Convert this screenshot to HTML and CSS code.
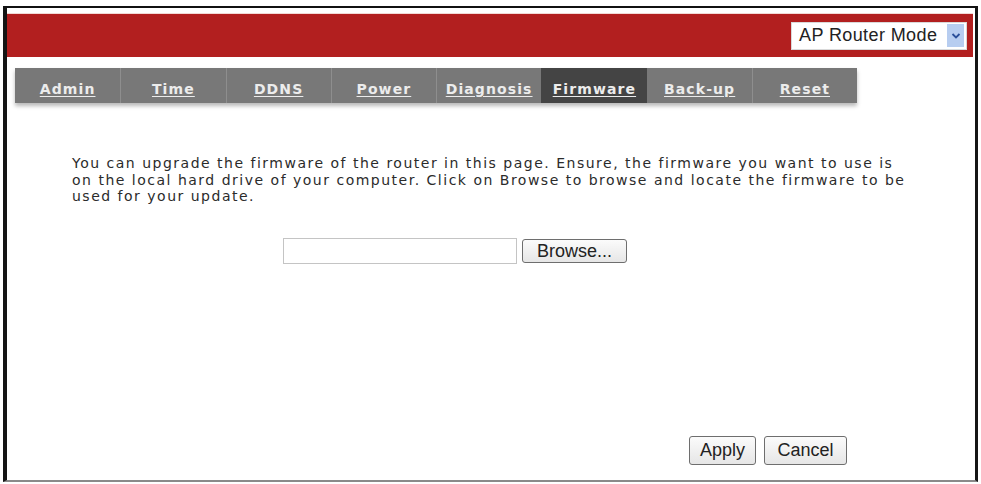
FILE: index.html
```html
<!DOCTYPE html>
<html>
<head>
<meta charset="utf-8">
<link rel="stylesheet" href="styles.css">
</head>
<body>
<div class="frame">
  <div class="header">
    <div class="mode-select">
      <span class="mode-text">AP Router Mode</span>
      <span class="mode-arrow"><svg width="10" height="8" viewBox="0 0 10 8"><path d="M1.5 2 L5 5.5 L8.5 2" fill="none" stroke="#2a4f9a" stroke-width="1.8"/></svg></span>
    </div>
  </div>
  <nav class="tabs">
    <a class="tab">Admin</a>
    <a class="tab">Time</a>
    <a class="tab">DDNS</a>
    <a class="tab">Power</a>
    <a class="tab">Diagnosis</a>
    <a class="tab active">Firmware</a>
    <a class="tab">Back-up</a>
    <a class="tab">Reset</a>
  </nav>
  <p class="intro">You can upgrade the firmware of the router in this page. Ensure, the firmware you want to use is<br>on the local hard drive of your computer. Click on Browse to browse and locate the firmware to be<br>used for your update.</p>
  <div class="file-row">
    <div class="file-field"></div>
    <button class="btn browse">Browse...</button>
  </div>
  <div class="actions">
    <button class="btn apply">Apply</button>
    <button class="btn cancel">Cancel</button>
  </div>
</div>
</body>
</html>
```
FILE: styles.css
```css
html, body {
  margin: 0;
  padding: 0;
  background: #ffffff;
}
body {
  width: 981px;
  height: 484px;
  overflow: hidden;
  font-family: "DejaVu Sans", Verdana, sans-serif;
}
.frame {
  box-sizing: border-box;
  margin: 6px 0 0 3px;
  width: 975px;
  height: 476px;
  border-top: 2px solid #111;
  border-left: 4px solid #151515;
  border-right: 3px solid #151515;
  border-bottom: 2px solid #8a8a8a;
  display: flex;
  flex-direction: column;
  background: #fff;
}
.header {
  margin-top: 5px;
  margin-right: 2px;
  height: 44px;
  background: #b21f1f;
  border-top: 1px solid #f3d9d6;
  display: flex;
  align-items: center;
  justify-content: flex-end;
  padding-right: 6px;
  box-sizing: border-box;
}
.mode-select {
  display: flex;
  align-items: center;
  background: #fff;
  height: 28px;
  width: 176px;
  box-sizing: border-box;
  border: 1px solid #d9d9d9;
  padding-left: 7px;
  padding-right: 2px;
}
.mode-text {
  flex: 1;
  font-family: "Liberation Sans", Arial, sans-serif;
  font-size: 18px;
  color: #222;
  letter-spacing: 0.4px;
  white-space: nowrap;
}
.mode-arrow {
  width: 17px;
  height: 23px;
  background: #b7cdf0;
  display: flex;
  align-items: center;
  justify-content: center;
}
.tabs {
  margin: 11px 0 0 8px;
  width: 842px;
  height: 35px;
  display: grid;
  grid-template-columns: repeat(8, 1fr);
  background: #787878;
  box-shadow: 0 3px 4px rgba(0,0,0,0.28);
}
.tab {
  display: block;
  text-align: center;
  padding-top: 13px;
  box-sizing: border-box;
  font-family: "DejaVu Sans", Verdana, sans-serif;
  font-weight: bold;
  font-size: 14px;
  letter-spacing: 1.1px;
  color: #ececec;
  text-decoration: underline;
  text-underline-offset: 2px;
  border-left: 1px solid #8e8e8e;
  white-space: nowrap;
}
.tab:first-child {
  border-left: none;
}
.tab.active {
  background: #444444;
  border-left-color: #444;
}
.tab.active + .tab {
  border-left-color: #787878;
}
.intro {
  margin: 52px 0 0 65px;
  font-family: "DejaVu Sans", Verdana, sans-serif;
  font-size: 14px;
  letter-spacing: 1.5px;
  line-height: 16.5px;
  color: #2b2b2b;
  white-space: nowrap;
}
.file-row {
  display: flex;
  align-items: center;
  gap: 5px;
  margin: 33px 0 0 276px;
}
.file-field {
  width: 234px;
  height: 26px;
  box-sizing: border-box;
  border: 1px solid #c4c4c4;
  background: #fff;
}
.btn {
  font-family: "Liberation Sans", Arial, sans-serif;
  font-size: 18px;
  color: #222;
  background: linear-gradient(#fbfbfb, #e6e6e6);
  border: 1px solid #6e6e6e;
  border-radius: 3px;
  box-sizing: border-box;
  padding: 0;
}
.browse {
  width: 105px;
  height: 24px;
  line-height: 20px;
}
.actions {
  margin-top: auto;
  padding-bottom: 15px;
  display: flex;
  justify-content: flex-end;
  gap: 8px;
  padding-right: 128px;
}
.apply {
  width: 67px;
  height: 29px;
}
.cancel {
  width: 83px;
  height: 29px;
}
```
